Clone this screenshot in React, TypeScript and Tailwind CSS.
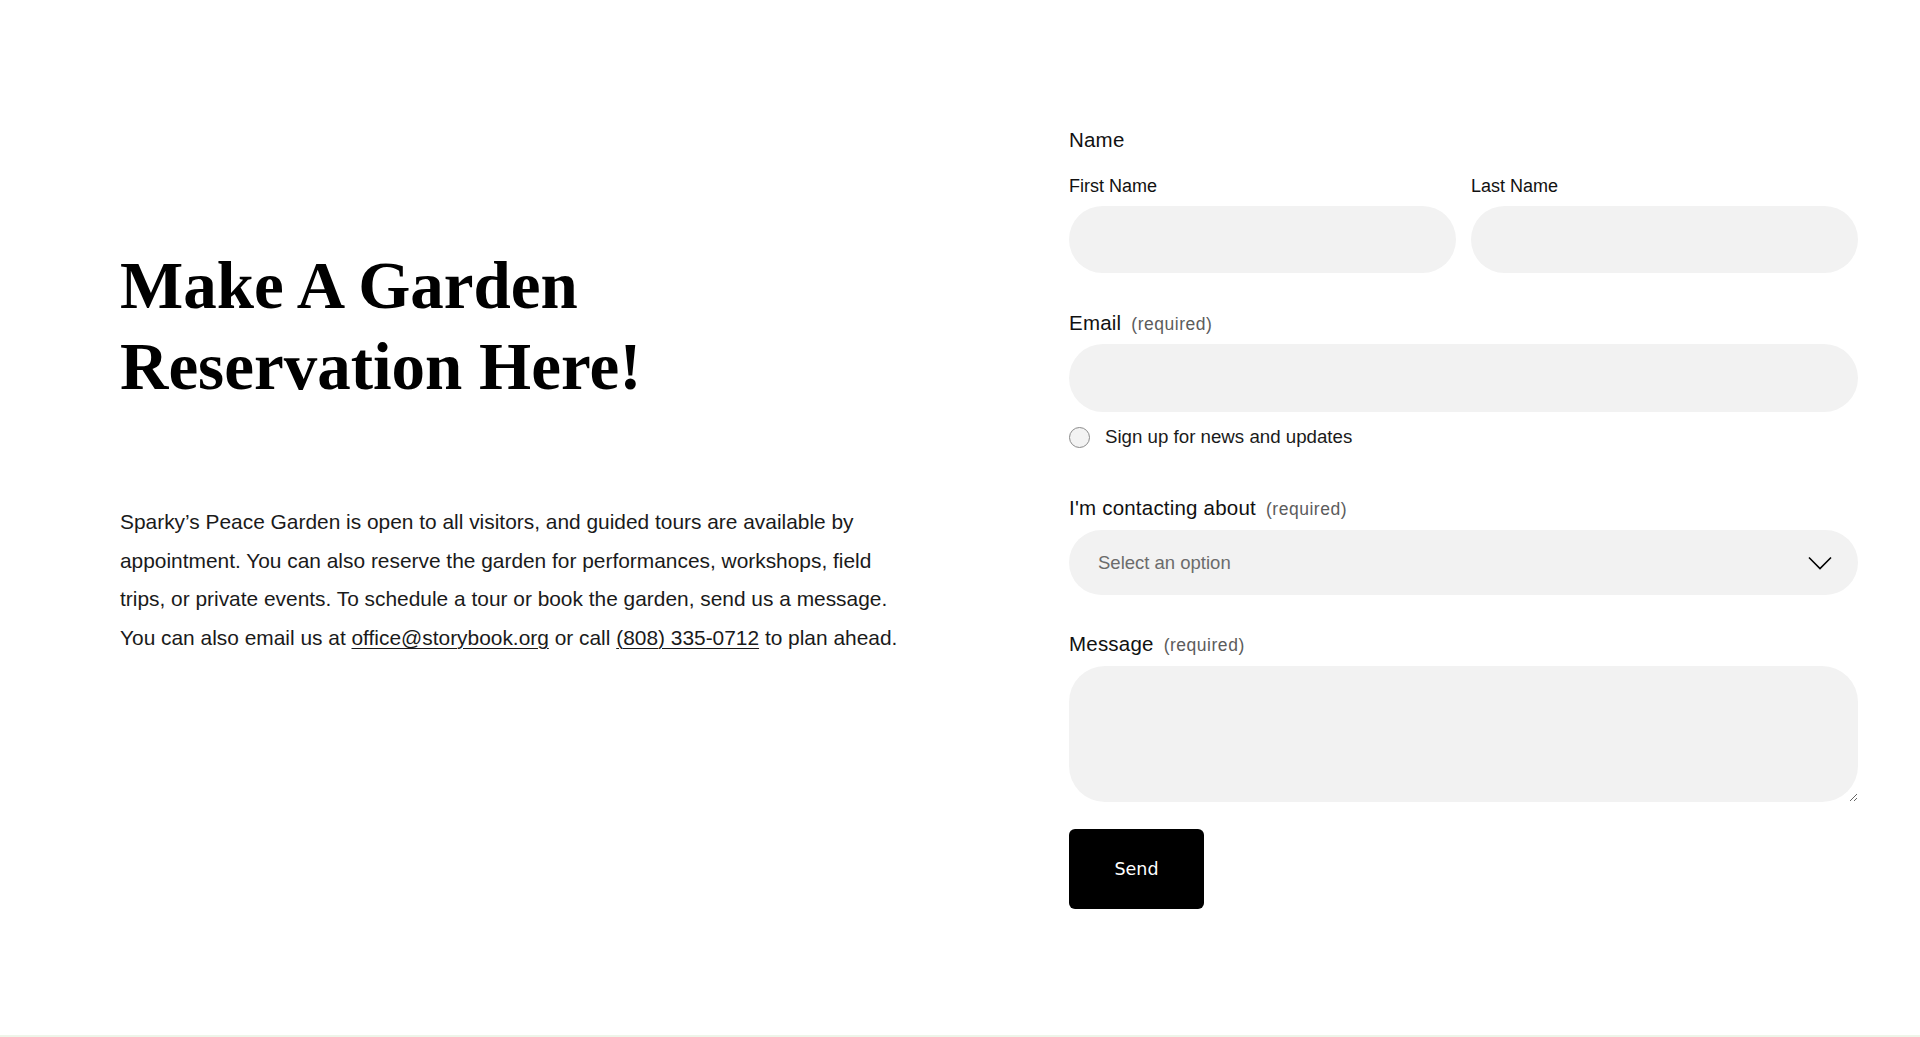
import React from 'react';

const sans = "font-['Liberation_Sans',Arial,sans-serif]";

const Label: React.FC<{ text: string; required?: boolean }> = ({ text, required }) => (
  <div className={`flex items-baseline text-[20.5px] leading-7 text-[#111] ${sans}`}>
    <span className="tracking-[0.01em]">{text}</span>
    {required && <span className="ml-[10px] text-[17.5px] tracking-[0.03em] text-[#5c5c5c]">(required)</span>}
  </div>
);

const App: React.FC = () => {
  return (
    <div className="w-full bg-white">
      <div className="flex h-[1035px] pl-[120px] pr-[62px]">
        {/* Left: heading and intro copy */}
        <div className="w-[840px] pt-[245px]">
          <h1 className="font-['Liberation_Serif',serif] text-[67px] font-bold leading-[81px] text-black">
            Make A Garden
            <br />
            Reservation Here!
          </h1>
          <p className={`mt-[96px] whitespace-nowrap text-[20.9px] leading-[38.5px] text-[#1a1a1a] ${sans}`}>
            Sparky’s Peace Garden is open to all visitors, and guided tours are available by
            <br />
            appointment. You can also reserve the garden for performances, workshops, field
            <br />
            trips, or private events. To schedule a tour or book the garden, send us a message.
            <br />
            You can also email us at{' '}
            <a href="#" className="underline decoration-1 underline-offset-[3px]">
              office@storybook.org
            </a>{' '}
            or call{' '}
            <a href="#" className="underline decoration-1 underline-offset-[3px]">
              (808) 335-0712
            </a>{' '}
            to plan ahead.
          </p>
        </div>

        {/* Right: contact form */}
        <form className="ml-auto flex w-[789px] flex-col pt-[126px]" onSubmit={(e) => e.preventDefault()}>
          <Label text="Name" />
          <div className="mt-[20px] grid grid-cols-2 gap-[15px]">
            <div className="flex flex-col">
              <span className={`text-[18px] leading-6 text-[#111] ${sans}`}>First Name</span>
              <input className="mt-2 h-[67px] rounded-full bg-[#f2f2f2] px-7 outline-none" />
            </div>
            <div className="flex flex-col">
              <span className={`text-[18px] leading-6 text-[#111] ${sans}`}>Last Name</span>
              <input className="mt-2 h-[67px] rounded-full bg-[#f2f2f2] px-7 outline-none" />
            </div>
          </div>

          <div className="mt-[36px]">
            <Label text="Email" required />
          </div>
          <input className="mt-[6px] h-[68px] rounded-full bg-[#f2f2f2] px-7 outline-none" />

          <label className="mt-[13px] flex h-6 items-center">
            <span className="h-[21px] w-[21px] rounded-full border border-[#8a8a8a] bg-[#f3f3f3]" />
            <span className={`ml-[15px] text-[18.7px] text-[#1a1a1a] ${sans}`}>Sign up for news and updates</span>
          </label>

          <div className="mt-[45px]">
            <Label text="I'm contacting about" required />
          </div>
          <div className="mt-[7px] flex h-[65px] items-center justify-between rounded-full bg-[#f2f2f2] pl-[29px] pr-[26px]">
            <span className={`text-[18.5px] text-[#6b6b6b] ${sans}`}>Select an option</span>
            <svg width="24" height="14" viewBox="0 0 24 14" fill="none">
              <polyline points="1,1.5 12,12.5 23,1.5" stroke="#000" strokeWidth="1.6" />
            </svg>
          </div>

          <div className="mt-[35px]">
            <Label text="Message" required />
          </div>
          <textarea className="mt-[7px] h-[136px] rounded-[36px] bg-[#f2f2f2] px-7 py-5 outline-none" />

          <button
            type="submit"
            className="mt-[27px] h-[80px] w-[135px] rounded-[6px] bg-black font-['DejaVu_Sans',sans-serif] text-[17.5px] text-white"
          >
            Send
          </button>
        </form>
      </div>
      <div className="h-[2px] bg-[#eef5e9]" />
    </div>
  );
};

export default App;
